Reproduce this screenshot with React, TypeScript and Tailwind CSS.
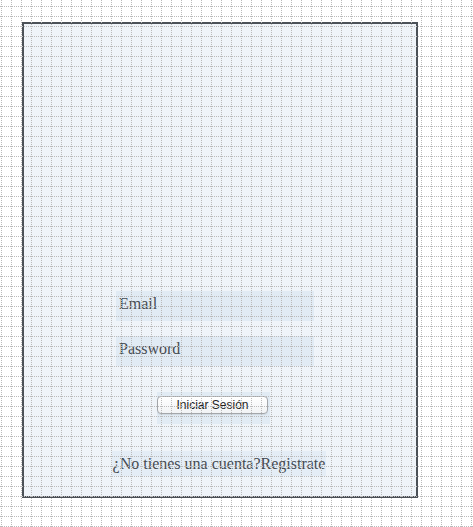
export default function App() {
  return (
    <div className="relative min-h-[527px] w-full bg-white">
      {/* page */}
      <div className="pl-[22px] pt-[22px]">
        <div className="flex h-[476px] w-[396px] flex-col items-start border-2 border-[#4b5157] bg-[#eff4f9] pt-[267px] font-['Liberation_Serif','Times_New_Roman',serif] text-[#454a50]">
          <input
            type="email"
            placeholder="Email"
            className="ml-[92px] h-[30px] w-[198px] bg-[#e1ebf4] pb-[5px] pl-[3px] text-[16px] outline-none placeholder:text-[#454a50]"
          />
          <input
            type="password"
            placeholder="Password"
            className="ml-[92px] mt-[15px] h-[30px] w-[198px] bg-[#e1ebf4] pb-[5px] pl-[3px] text-[16px] outline-none placeholder:text-[#454a50]"
          />
          <div className="ml-[133px] mt-[26px] h-[32px] w-[113px] bg-[#e1ebf4]">
            <button className="h-[18px] w-[111px] rounded-[4px] border border-[#a3a6aa] bg-gradient-to-b from-white to-[#f1f3f5] font-['Liberation_Sans',Arial,sans-serif] text-[12px] leading-none text-[#222] shadow-[0_1px_1px_rgba(0,0,0,0.08)]">
              Iniciar Sesión
            </button>
          </div>
          <div className="ml-[88px] mt-[27px] flex h-[25px] w-[214px] items-center justify-center whitespace-nowrap bg-[#e4edf6] text-[16px]">
            ¿No tienes una cuenta?Registrate
          </div>
        </div>
      </div>

      {/* dotted grid overlay */}
      <div className="pointer-events-none absolute inset-0 [background-image:linear-gradient(to_right,#bababa_1px,transparent_1px)] [background-position:1px_0] [background-size:10px_10px] [mask-image:repeating-linear-gradient(to_bottom,#000_0_1px,transparent_1px_2px)]" />
      <div className="pointer-events-none absolute inset-0 [background-image:linear-gradient(to_bottom,#bababa_1px,transparent_1px)] [background-position:0_6px] [background-size:10px_10px] [mask-image:repeating-linear-gradient(to_right,#000_0_1px,transparent_1px_2px)]" />
    </div>
  );
}
